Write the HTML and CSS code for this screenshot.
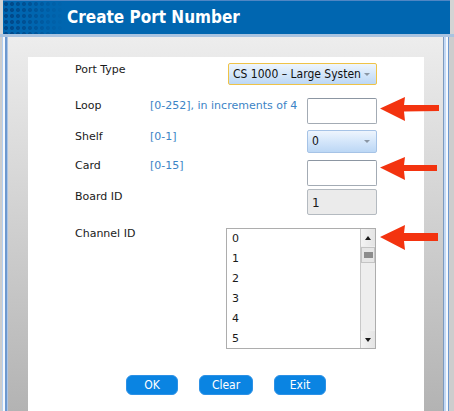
FILE: index.html
```html
<!DOCTYPE html>
<html lang="en">
<head>
    <meta charset="UTF-8">
    <title>Create Port Number</title>
    <link rel="stylesheet" href="styles.css">
</head>
<body>
    <div class="window">
        <div class="titlebar">
            <h1>Create Port Number</h1>
        </div>
        <div class="frame">
            <div class="edge-left"></div>
            <div class="panel">
                <div class="content">
                    <div class="row row-port">
                        <span class="label">Port Type</span>
                        <div class="select select-wide focused">CS 1000 &ndash; Large Systen<span class="caret"></span></div>
                    </div>
                    <div class="row row-loop">
                        <span class="label">Loop</span>
                        <span class="hint">[0-252], in increments of 4</span>
                        <div class="field"></div>
                    </div>
                    <div class="row row-shelf">
                        <span class="label">Shelf</span>
                        <span class="hint">[0-1]</span>
                        <div class="select select-small">0<span class="caret"></span></div>
                    </div>
                    <div class="row row-card">
                        <span class="label">Card</span>
                        <span class="hint">[0-15]</span>
                        <div class="field"></div>
                    </div>
                    <div class="row row-board">
                        <span class="label">Board ID</span>
                        <div class="field disabled">1</div>
                    </div>
                    <div class="row row-channel">
                        <span class="label">Channel ID</span>
                        <div class="listbox">
                            <ul class="items">
                                <li>0</li>
                                <li>1</li>
                                <li>2</li>
                                <li>3</li>
                                <li>4</li>
                                <li>5</li>
                            </ul>
                            <div class="scrollbar">
                                <div class="sb-btn"><span class="tri-up"></span></div>
                                <div class="sb-thumb"><span></span></div>
                                <div class="sb-track"></div>
                                <div class="sb-btn"><span class="tri-down"></span></div>
                            </div>
                        </div>
                    </div>
                    <div class="buttons">
                        <button class="btn btn-ok">OK</button>
                        <button class="btn btn-clear">Clear</button>
                        <button class="btn btn-exit">Exit</button>
                    </div>

                    <svg class="pointer pointer-loop" width="60" height="25" viewBox="0 0 60 25"><path d="M0 11.5 L25 0 L24 8 L59 8 L59 14 L24 14.5 L25 24 Z"/></svg>
                    <svg class="pointer pointer-card" width="60" height="25" viewBox="0 0 60 25"><path d="M0 10.5 L25 0 L24 8 L57 8 L57 14 L24 14 L25 23 Z"/></svg>
                    <svg class="pointer pointer-channel" width="60" height="26" viewBox="0 0 60 26"><path d="M0 12 L25 0 L24 8 L58 8 L58 16 L24 16 L25 25 Z"/></svg>
                </div>
            </div>
            <div class="edge-right"></div>
        </div>
    </div>
</body>
</html>
```

FILE: styles.css
```css
html, body {
    margin: 0;
    padding: 0;
}

body {
    width: 454px;
    height: 411px;
    overflow: hidden;
    background-color: #d4d4d4;
    font-family: 'DejaVu Sans', 'Liberation Sans', sans-serif;
    font-size: 11px;
    color: #1a1a1a;
}

.window {
    display: flex;
    flex-direction: column;
    height: 411px;
}

.titlebar {
    height: 33px;
    margin: 0 4px 0 3px;
    border-top: 1px solid #4f86c4;
    background:
        linear-gradient(to right, rgba(0, 102, 176, 0) 8px, #0066b0 62px),
        radial-gradient(circle, #00498a 1.6px, rgba(0, 73, 138, 0) 2.4px) 0 0 / 6px 6px,
        #0066b0;
}

.titlebar h1 {
    margin: 0;
    padding: 5px 0 0 64px;
    font-family: 'DejaVu Sans Condensed', 'DejaVu Sans', sans-serif;
    font-size: 17px;
    line-height: 22px;
    font-weight: bold;
    color: #ffffff;
}

.frame {
    flex: 1;
    display: flex;
    border-top: 3px solid #a9c3e0;
}

.edge-left {
    width: 8px;
    background: linear-gradient(to right,
        #cdcdcd 0, #cdcdcd 2px,
        #b5d0f0 2px, #b5d0f0 3px,
        #f6f9fd 3px, #f6f9fd 5px,
        #6c98cf 5px, #6c98cf 7px,
        #a9c4e6 7px, #a9c4e6 8px);
}

.edge-right {
    width: 11px;
    background: linear-gradient(to right,
        #7d9abd 0, #7d9abd 1px,
        #c3d9f6 1px, #c3d9f6 3px,
        #f6f9fd 3px, #f6f9fd 5px,
        #6c98cf 5px, #6c98cf 6px,
        #cdcdcd 6px, #cdcdcd 11px);
}

.panel {
    flex: 1;
    padding: 20px 19px 0 20px;
    background: linear-gradient(#ededed, #b3b3b3);
}

.content {
    position: relative;
    display: flow-root;
    height: 100%;
    padding: 0 47px;
    background-color: #ffffff;
}

.row {
    display: flex;
    align-items: flex-start;
}

.label {
    width: 75px;
    line-height: 14px;
}

.hint {
    flex: 1;
    line-height: 14px;
    color: #3c84c6;
}

.row-port { margin-top: 6px; }
.row-loop { margin-top: 13px; }
.row-shelf { margin-top: 6px; }
.row-card { margin-top: 7px; }
.row-board { margin-top: 3px; }
.row-channel { margin-top: 13px; }

.row-loop .label, .row-loop .hint, .row-board .label { padding-top: 1px; }
.row-card .label, .row-card .hint, .row-channel .label { margin-top: -1px; }

.select {
    position: relative;
    margin-left: auto;
    box-sizing: border-box;
    padding-left: 4px;
    border: 1px solid #a6c3e6;
    border-radius: 2px;
    background: linear-gradient(#eef5fd, #d4e6fa 50%, #bcd7f5);
    font-family: 'DejaVu Sans Condensed', 'DejaVu Sans', sans-serif;
    font-size: 12px;
    color: #111111;
}

.select-wide {
    width: 149px;
    height: 22px;
    line-height: 20px;
}

.select-small {
    width: 70px;
    height: 23px;
    line-height: 20px;
}

.focused {
    border-color: #efc347;
}

.caret {
    position: absolute;
    right: 6px;
    top: 9px;
    border-left: 3px solid transparent;
    border-right: 3px solid transparent;
    border-top: 3px solid #8a96a4;
}

.field {
    margin-left: auto;
    box-sizing: border-box;
    width: 70px;
    height: 26px;
    padding-left: 4px;
    border: 1px solid #a3abb4;
    border-top-color: #8c96a2;
    border-radius: 2px;
    background-color: #ffffff;
    font-size: 12px;
    line-height: 24px;
}

.field.disabled {
    background-color: #ebebeb;
    border-color: #b4bac0;
    padding-top: 1px;
}

.listbox {
    margin-left: auto;
    margin-right: 1px;
    display: flex;
    box-sizing: border-box;
    width: 150px;
    height: 121px;
    border: 1px solid #adadad;
    background-color: #ffffff;
    overflow: hidden;
}

.items {
    flex: 1;
    margin: 0;
    padding: 0 0 0 5px;
    list-style: none;
}

.items li {
    height: 20px;
    line-height: 20px;
}

.scrollbar {
    display: flex;
    flex-direction: column;
    width: 14px;
    border-left: 1px solid #c8c8c8;
    background-color: #eeeeee;
}

.sb-btn {
    height: 17px;
    display: flex;
    align-items: center;
    justify-content: center;
    background: linear-gradient(to right, #f4f4f4, #e4e4e4);
}

.tri-up {
    border-left: 3px solid transparent;
    border-right: 3px solid transparent;
    border-bottom: 4px solid #1a1a1a;
}

.tri-down {
    border-left: 3px solid transparent;
    border-right: 3px solid transparent;
    border-top: 4px solid #1a1a1a;
}

.sb-thumb {
    height: 14px;
    margin: 1px 0;
    display: flex;
    align-items: center;
    justify-content: center;
    border: 1px solid #c4c4c4;
    background-color: #e6e6e6;
}

.sb-thumb span {
    width: 9px;
    height: 6px;
    background-color: #8c8c8c;
}

.sb-track {
    flex: 1;
}

.buttons {
    display: flex;
    justify-content: center;
    gap: 21px;
    margin-top: 26px;
}

.btn {
    height: 20px;
    padding: 0;
    border: 1px solid #2c91e6;
    border-radius: 6px;
    background-color: #0a84e2;
    color: #ffffff;
    font-family: 'DejaVu Sans Condensed', 'DejaVu Sans', 'Liberation Sans', sans-serif;
    font-size: 12px;
    line-height: 18px;
}

.btn-ok, .btn-exit { width: 52px; }
.btn-clear { width: 54px; }

.pointer {
    position: absolute;
    left: 352px;
    fill: #f3330f;
}

.pointer-loop { top: 40px; }
.pointer-card { top: 100px; }
.pointer-channel { top: 168px; }
```
